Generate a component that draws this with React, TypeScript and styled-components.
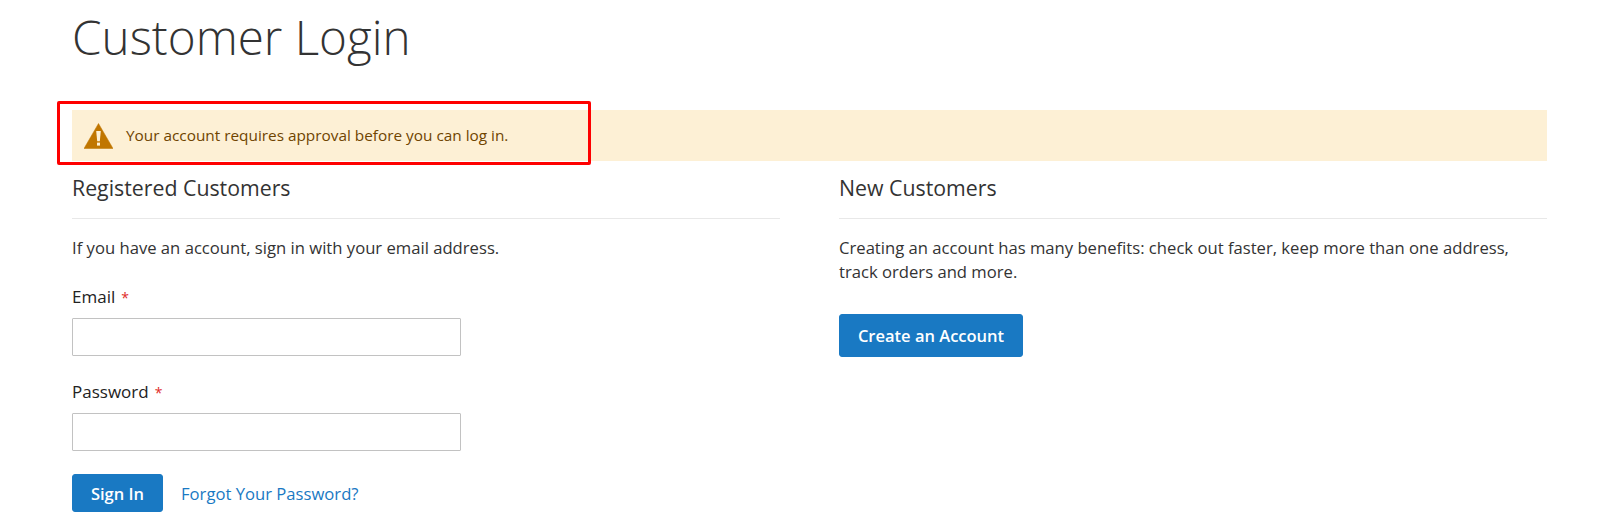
import React from 'react';
import styled, { createGlobalStyle } from 'styled-components';

const Global = createGlobalStyle`
  html, body { margin: 0; padding: 0; background: #fff; }
  body { font-family: "Open Sans", sans-serif; color: #333; height: 528px; overflow: hidden; }
`;

const Page = styled.main`
  position: relative;
  padding: 0 53px 0 72px;
`;

const Title = styled.h1`
  margin: 0;
  height: 110px;
  padding-top: 5px;
  box-sizing: border-box;
  font-size: 47.6px;
  line-height: 64px;
  font-weight: 300;
  color: #333;
`;

const Notice = styled.div`
  display: flex;
  align-items: center;
  height: 51px;
  background: #fdf0d5;
  color: #6f4400;
  font-size: 15.35px;
  padding-left: 12px;
  gap: 13px;
`;

const NoticeText = styled.span`
  padding-bottom: 2px;
`;

const Highlight = styled.div`
  position: absolute;
  left: 57px;
  top: 101px;
  width: 534px;
  height: 64px;
  box-sizing: border-box;
  border: 3px solid #fe0000;
  border-radius: 2px;
  pointer-events: none;
`;

const Columns = styled.div`
  display: grid;
  grid-template-columns: 708px 708px;
  column-gap: 59px;
`;

const Column = styled.section`
  display: flex;
  flex-direction: column;
  align-items: flex-start;
`;

const Heading = styled.h2`
  align-self: stretch;
  margin: 0 0 17px;
  height: 58px;
  padding-top: 13px;
  box-sizing: border-box;
  font-size: 21.3px;
  line-height: 28px;
  font-weight: 400;
  color: #333;
  border-bottom: 1px solid #e8e8e8;
`;

const Text = styled.p`
  margin: 0 0 26px;
  font-size: 16.65px;
  line-height: 24px;
  color: #333;
`;

const Label = styled.label`
  display: block;
  font-size: 17px;
  font-weight: 400;
  line-height: 22px;
  margin-bottom: 9px;
  color: #222;
`;

const Required = styled.span`
  color: #e02b27;
  font-size: 14px;
  margin-left: 6px;
`;

const Field = styled.div`
  margin-bottom: 25px;
`;

const Input = styled.input`
  display: block;
  width: 389px;
  height: 38px;
  box-sizing: border-box;
  border: 1px solid #c2c2c2;
  border-radius: 1px;
  background: #fff;
  margin: 0;
`;

const Actions = styled.div`
  display: flex;
  align-items: center;
  gap: 18px;
  margin-top: -2px;
`;

const Button = styled.button`
  height: 38px;
  padding: 0 17px;
  background: #1979c3;
  border: 1px solid #1979c3;
  border-radius: 3px;
  color: #fff;
  font-family: "Open Sans", sans-serif;
  font-size: 16.5px;
  font-weight: 600;
  cursor: pointer;
`;

const SignIn = styled(Button)`
  width: 91px;
`;

const TallButton = styled(Button)`
  height: 43px;
  width: 184px;
  margin-top: 4px;
`;

const Link = styled.a`
  color: #1979c3;
  font-size: 16.65px;
  text-decoration: none;
`;

export default function App() {
  return (
    <Page>
      <Global />
      <Title>Customer Login</Title>
      <Notice>
        <svg width="29" height="26" viewBox="0 0 29 26" aria-hidden="true">
          <path d="M14.5 0.5 L29 25.5 H0 Z" fill="#c07600" stroke="#c07600" strokeWidth="0.5" strokeLinejoin="round" />
          <path d="M12.2 8 H16.8 L15.8 18.2 H13.2 Z" fill="#fdf0d5" />
          <rect x="13" y="19.6" width="3" height="3" fill="#fdf0d5" />
        </svg>
        <NoticeText>Your account requires approval before you can log in.</NoticeText>
      </Notice>
      <Highlight />
      <Columns>
        <Column>
          <Heading>Registered Customers</Heading>
          <Text>If you have an account, sign in with your email address.</Text>
          <Field>
            <Label>Email<Required>*</Required></Label>
            <Input type="email" />
          </Field>
          <Field>
            <Label>Password<Required>*</Required></Label>
            <Input type="password" />
          </Field>
          <Actions>
            <SignIn>Sign In</SignIn>
            <Link href="#">Forgot Your Password?</Link>
          </Actions>
        </Column>
        <Column>
          <Heading>New Customers</Heading>
          <Text>Creating an account has many benefits: check out faster, keep more than one address, track orders and more.</Text>
          <TallButton>Create an Account</TallButton>
        </Column>
      </Columns>
    </Page>
  );
}
